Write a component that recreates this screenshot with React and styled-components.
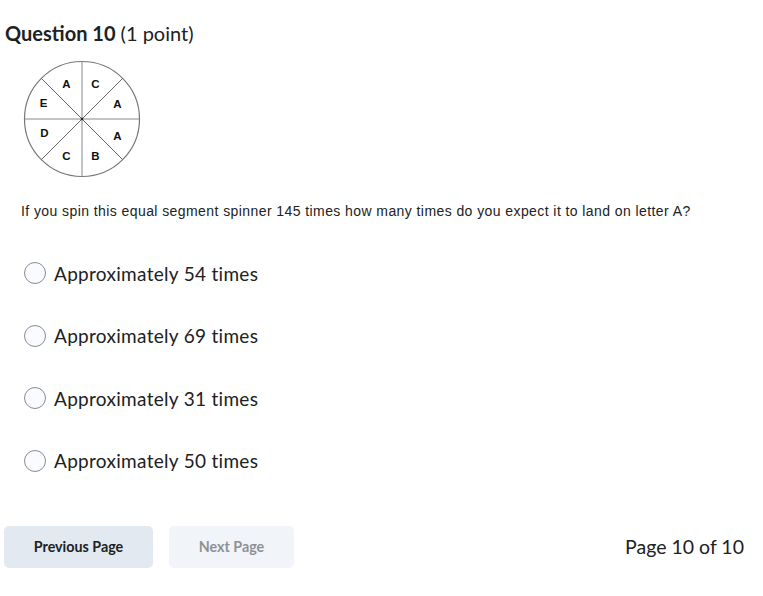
import styled, { createGlobalStyle } from 'styled-components';

const GlobalStyle = createGlobalStyle`
    body {
        margin: 0;
        background: #ffffff;
        font-family: Lato, "Open Sans", sans-serif;
        color: #202122;
    }
`

const Page = styled.div`
    width: 763px;
    height: 596px;
    box-sizing: border-box;
    padding: 20px 0 0 5px;
    display: flex;
    flex-direction: column;
`

const Title = styled.h2`
    margin: 0;
    font-size: 20px;
    font-weight: 400;
    line-height: 26px;

    strong {
        font-weight: 700;
    }
`

const SpinnerWrap = styled.div`
    margin: 14px 0 0 17px;
    width: 120px;
    height: 120px;
`

const Prompt = styled.p`
    margin: 22px 0 0 16px;
    font-family: "Liberation Sans", Arial, sans-serif;
    font-size: 14px;
    letter-spacing: 0.42px;
    line-height: 18px;
    color: #222;
`

const Options = styled.div`
    margin: 42px 0 0 19px;
    display: flex;
    flex-direction: column;
    gap: 40.5px;
`

const Option = styled.label`
    display: flex;
    align-items: center;
    gap: 8px;
    height: 22px;
    font-size: 19px;
    letter-spacing: 0.3px;
    color: #202122;
`

const Radio = styled.span`
    width: 20px;
    height: 20px;
    border-radius: 50%;
    border: 1px solid #868c93;
    background: #f9fbff;
    flex: none;
`

const Footer = styled.div`
    margin-top: 54px;
    display: flex;
    align-items: center;
    padding-right: 19px;
    margin-left: -1px;
`

const NavButton = styled.button`
    height: 42px;
    width: ${p => p.$w}px;
    border: none;
    border-radius: 5px;
    margin-right: 16px;
    font-family: Lato, sans-serif;
    font-weight: 700;
    font-size: 14.3px;
    background: ${p => p.$disabled ? '#f1f4f8' : '#e3e9f1'};
    color: ${p => p.$disabled ? '#8d9196' : '#202122'};
`

const PageCount = styled.div`
    margin-left: auto;
    font-size: 19.5px;
    color: #202122;
`

const letters = [
    { t: 'A', x: 44.5, y: 24 },
    { t: 'C', x: 73.5, y: 24 },
    { t: 'A', x: 95.5, y: 44 },
    { t: 'A', x: 95.5, y: 76 },
    { t: 'B', x: 73.5, y: 96 },
    { t: 'C', x: 44.5, y: 96 },
    { t: 'D', x: 22.5, y: 73 },
    { t: 'E', x: 21.5, y: 43 },
]

const Spinner = () => (
    <svg width="120" height="120" viewBox="0 0 120 120">
        <circle cx="60" cy="59" r="57.5" fill="#fff" stroke="#777" strokeWidth="1.2" />
        <line x1="60" y1="1.5" x2="60" y2="116.5" stroke="#888" strokeWidth="1" />
        <line x1="2.5" y1="59" x2="117.5" y2="59" stroke="#888" strokeWidth="1" />
        <line x1="19.3" y1="18.3" x2="100.7" y2="99.7" stroke="#666" strokeWidth="1" />
        <line x1="100.7" y1="18.3" x2="19.3" y2="99.7" stroke="#666" strokeWidth="1" />
        <circle cx="60" cy="59" r="1.3" fill="#222" />
        {letters.map((l, i) => (
            <text key={i} x={l.x} y={l.y + 4.3} fontFamily="'Liberation Sans', Arial, sans-serif" fontWeight="700" fontSize="11.5" fill="#111" textAnchor="middle">{l.t}</text>
        ))}
    </svg>
)

const answers = ['Approximately 54 times', 'Approximately 69 times', 'Approximately 31 times', 'Approximately 50 times']

const App = () => {
    return (
        <Page>
            <GlobalStyle />
            <Title><strong>Question 10</strong> (1 point)</Title>
            <SpinnerWrap>
                <Spinner />
            </SpinnerWrap>
            <Prompt>If you spin this equal segment spinner 145 times how many times do you expect it to land on letter A?</Prompt>
            <Options>
                {answers.map((a) => (
                    <Option key={a}>
                        <Radio />
                        {a}
                    </Option>
                ))}
            </Options>
            <Footer>
                <NavButton $w={149}>Previous Page</NavButton>
                <NavButton $w={125} $disabled>Next Page</NavButton>
                <PageCount>Page 10 of 10</PageCount>
            </Footer>
        </Page>
    )
}

export default App;
